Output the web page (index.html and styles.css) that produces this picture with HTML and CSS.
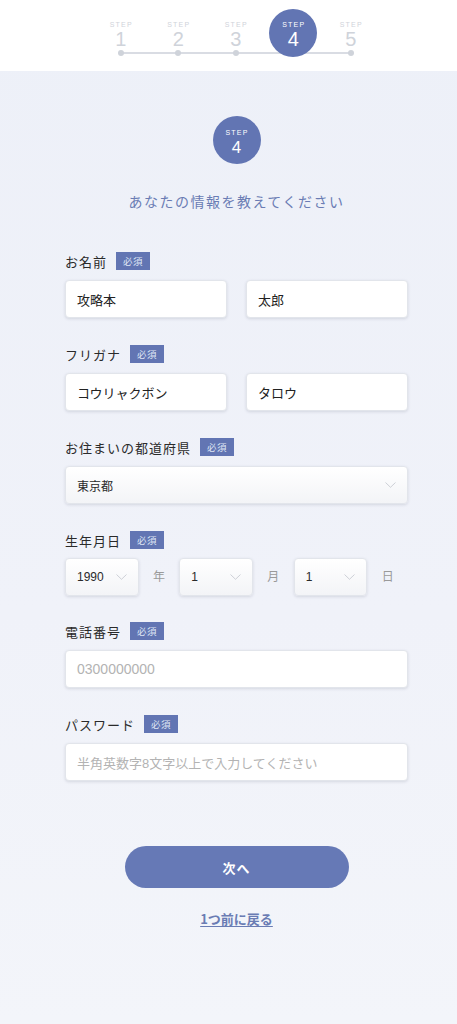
FILE: index.html
```html
<!DOCTYPE html>
<html lang="ja">
<head>
<meta charset="utf-8">
<title>STEP 4</title>
<link rel="stylesheet" href="styles.css">
</head>
<body>
<header class="header">
  <ol class="steps">
    <li class="step"><div class="bubble"><span class="bubble-label">STEP</span><span class="bubble-num">1</span></div><span class="dot"></span></li>
    <li class="step"><div class="bubble"><span class="bubble-label">STEP</span><span class="bubble-num">2</span></div><span class="dot"></span></li>
    <li class="step"><div class="bubble"><span class="bubble-label">STEP</span><span class="bubble-num">3</span></div><span class="dot"></span></li>
    <li class="step is-active"><div class="bubble"><span class="bubble-label">STEP</span><span class="bubble-num">4</span></div><span class="dot"></span></li>
    <li class="step"><div class="bubble"><span class="bubble-label">STEP</span><span class="bubble-num">5</span></div><span class="dot"></span></li>
  </ol>
</header>

<main class="main">
  <div class="badge-step"><span class="badge-step-label">STEP</span><span class="badge-step-num">4</span></div>
  <h1 class="title">あなたの情報を教えてください</h1>

  <form class="form">
    <div class="field">
      <div class="label-row"><span class="label">お名前</span><span class="req">必須</span></div>
      <div class="pair">
        <div class="input">攻略本</div>
        <div class="input">太郎</div>
      </div>
    </div>

    <div class="field">
      <div class="label-row"><span class="label">フリガナ</span><span class="req">必須</span></div>
      <div class="pair">
        <div class="input">コウリャクボン</div>
        <div class="input">タロウ</div>
      </div>
    </div>

    <div class="field">
      <div class="label-row"><span class="label">お住まいの都道府県</span><span class="req">必須</span></div>
      <div class="select select-wide">
        <span class="select-text">東京都</span>
        <svg class="chev" width="11" height="6" viewBox="0 0 11 6"><path d="M0.5 0.5 L5.5 5.3 L10.5 0.5" fill="none" stroke="#c8ccd3" stroke-width="0.9"/></svg>
      </div>
    </div>

    <div class="field field-date">
      <div class="label-row"><span class="label">生年月日</span><span class="req">必須</span></div>
      <div class="date-row">
        <div class="select select-small"><span class="select-text">1990</span><svg class="chev" width="11" height="6" viewBox="0 0 11 6"><path d="M0.5 0.5 L5.5 5.3 L10.5 0.5" fill="none" stroke="#c8ccd3" stroke-width="0.9"/></svg></div>
        <span class="unit">年</span>
        <div class="select select-small"><span class="select-text">1</span><svg class="chev" width="11" height="6" viewBox="0 0 11 6"><path d="M0.5 0.5 L5.5 5.3 L10.5 0.5" fill="none" stroke="#c8ccd3" stroke-width="0.9"/></svg></div>
        <span class="unit">月</span>
        <div class="select select-small"><span class="select-text">1</span><svg class="chev" width="11" height="6" viewBox="0 0 11 6"><path d="M0.5 0.5 L5.5 5.3 L10.5 0.5" fill="none" stroke="#c8ccd3" stroke-width="0.9"/></svg></div>
        <span class="unit">日</span>
      </div>
    </div>

    <div class="field">
      <div class="label-row"><span class="label">電話番号</span><span class="req">必須</span></div>
      <div class="input placeholder num">0300000000</div>
    </div>

    <div class="field">
      <div class="label-row"><span class="label">パスワード</span><span class="req">必須</span></div>
      <div class="input placeholder small">半角英数字8文字以上で入力してください</div>
    </div>

    <div class="actions">
      <button type="button" class="btn">次へ</button>
      <a class="back" href="#">1つ前に戻る</a>
    </div>
  </form>
</main>
</body>
</html>
```

FILE: styles.css
```css
* { box-sizing: border-box; }

html, body {
  margin: 0;
  padding: 0;
}

body {
  width: 457px;
  min-height: 1024px;
  font-family: "Liberation Sans", "Noto Sans CJK JP", sans-serif;
  color: #2a2a2a;
  background: linear-gradient(180deg, #edf0f8 0%, #f0f2f9 60%, #f3f5fa 100%);
}

/* header steps */
.header {
  height: 71px;
  background: #ffffff;
}

.steps {
  list-style: none;
  margin: 0 0 0 92px;
  padding: 9px 0 0;
  width: 288px;
  display: grid;
  grid-template-columns: repeat(5, 57.5px);
  position: relative;
}

.steps::before {
  content: "";
  position: absolute;
  left: 29px;
  right: 29px;
  top: 52px;
  height: 2px;
  background: #d9dce3;
}

.step {
  display: flex;
  flex-direction: column;
  align-items: center;
}

.bubble {
  width: 48px;
  height: 48px;
  border-radius: 50%;
  display: flex;
  flex-direction: column;
  align-items: center;
  justify-content: center;
  padding-top: 4px;
  color: #cfd3da;
  position: relative;
  z-index: 1;
}

.bubble-label {
  font-size: 7px;
  line-height: 8px;
  letter-spacing: 1.2px;
  padding-left: 1px;
}

.bubble-num {
  font-size: 20px;
  line-height: 20px;
}

.dot {
  width: 6px;
  height: 6px;
  border-radius: 50%;
  background: #cfd3da;
  margin-top: -7px;
  position: relative;
}

.is-active .bubble {
  background: #6275b3;
  color: #ffffff;
}

/* main */
.main {
  width: 343px;
  margin-left: 65px;
  padding-top: 45px;
  padding-bottom: 60px;
  display: flex;
  flex-direction: column;
  align-items: center;
}

.badge-step {
  width: 48px;
  height: 48px;
  border-radius: 50%;
  background: #6275b3;
  color: #fff;
  display: flex;
  flex-direction: column;
  align-items: center;
  justify-content: center;
  padding-top: 4px;
  gap: 2px;
}

.badge-step-label {
  font-size: 7px;
  line-height: 8px;
  letter-spacing: 1.2px;
  padding-left: 1px;
}

.badge-step-num {
  font-size: 17px;
  line-height: 17px;
}

.title {
  margin: 27px 0 0;
  font-family: "Noto Sans CJK JP", sans-serif;
  font-weight: 400;
  font-size: 14px;
  line-height: 20px;
  letter-spacing: 1.5px;
  color: #6a7cb4;
}

.form {
  width: 100%;
  margin-top: 41px;
  display: flex;
  flex-direction: column;
}

.field {
  margin-bottom: 27px;
}

.label-row {
  display: flex;
  align-items: center;
  gap: 9px;
  height: 18px;
  margin-bottom: 10px;
}

.label {
  font-family: "Noto Sans CJK JP", sans-serif;
  font-size: 13px;
  letter-spacing: 1px;
  color: #2a2a2a;
}

.req {
  width: 34px;
  height: 18px;
  background: #6275b3;
  color: #dfe5f5;
  font-family: "Noto Sans CJK JP", sans-serif;
  font-size: 9.5px;
  display: flex;
  align-items: center;
  justify-content: center;
  letter-spacing: 0.5px;
}

.pair {
  display: grid;
  grid-template-columns: 162px 162px;
  justify-content: space-between;
}

.input {
  height: 38px;
  background: #ffffff;
  border: 1px solid #e2e5eb;
  border-radius: 4px;
  box-shadow: 0 1px 3px rgba(40, 50, 80, 0.14);
  padding: 0 11px;
  display: flex;
  align-items: center;
  font-family: "Liberation Sans", "Noto Sans CJK JP", sans-serif;
  font-size: 13px;
  color: #222;
}

.placeholder {
  color: #b3b3b3;
}

.num {
  font-size: 14px;
}

.small {
  font-size: 13px;
}

.select {
  height: 38px;
  background: linear-gradient(180deg, #ffffff 0%, #f3f4f7 100%);
  border: 1px solid #e2e5eb;
  border-radius: 4px;
  box-shadow: 0 1px 3px rgba(40, 50, 80, 0.14);
  padding: 0 11px;
  display: flex;
  align-items: center;
  justify-content: space-between;
}

.select-text {
  font-family: "Liberation Sans", "Noto Sans CJK JP", sans-serif;
  font-size: 12px;
  color: #2a2a2a;
}

.select-small {
  width: 74px;
}

.field-date {
  margin-bottom: 26px;
}

.field-date .label-row {
  margin-bottom: 9px;
}

.date-row {
  display: flex;
  align-items: center;
}

.unit {
  width: 41px;
  text-align: center;
  font-family: "Noto Sans CJK JP", sans-serif;
  font-size: 12px;
  color: #9a9a9a;
  padding-bottom: 3px;
}

.chev {
  display: block;
}

.actions {
  margin-top: 38px;
  display: flex;
  flex-direction: column;
  align-items: center;
}

.btn {
  width: 224px;
  height: 42px;
  border: 0;
  border-radius: 21px;
  background: #6679b6;
  color: #ffffff;
  font-family: "Noto Sans CJK JP", sans-serif;
  font-weight: 700;
  font-size: 13px;
  letter-spacing: 1px;
  padding: 0;
}

.back {
  margin-top: 21px;
  font-family: "Noto Sans CJK JP", sans-serif;
  font-weight: 700;
  font-size: 13px;
  line-height: 20px;
  color: #6a7cb4;
  text-decoration: underline;
  text-underline-offset: 2px;
}
```
